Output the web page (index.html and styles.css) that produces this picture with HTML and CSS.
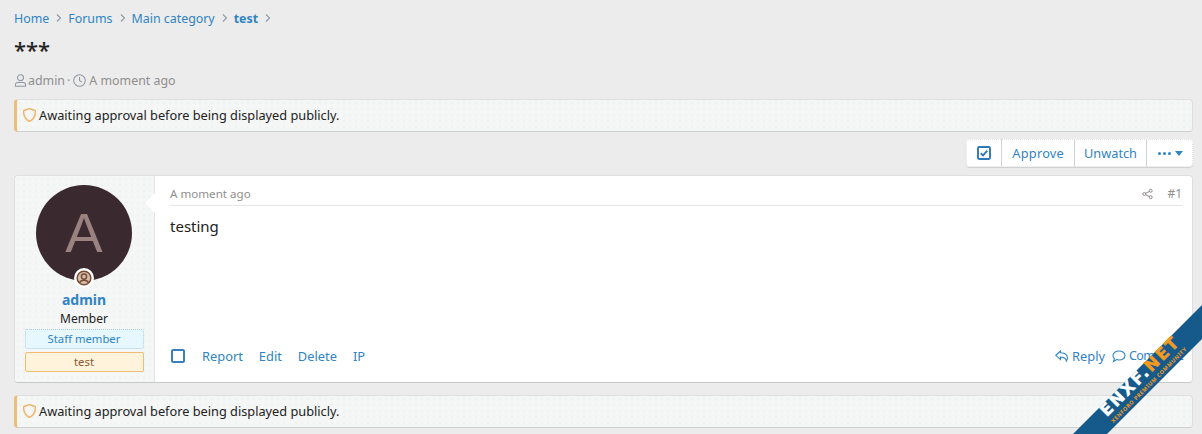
FILE: index.html
```html
<!DOCTYPE html>
<html lang="en">
<head>
<meta charset="utf-8">
<title>test</title>
<link rel="stylesheet" href="styles.css">
</head>
<body>
<nav class="crumbs">
  <a href="#">Home</a><svg class="chev" viewBox="0 0 8 10"><path d="M2 1.500 5.500 5 2 8.500"/></svg>
  <a href="#">Forums</a><svg class="chev" viewBox="0 0 8 10"><path d="M2 1.500 5.500 5 2 8.500"/></svg>
  <a href="#">Main category</a><svg class="chev" viewBox="0 0 8 10"><path d="M2 1.500 5.500 5 2 8.500"/></svg>
  <a href="#" class="bold">test</a><svg class="chev" viewBox="0 0 8 10"><path d="M2 1.500 5.500 5 2 8.500"/></svg>
</nav>
<h1 class="title">***</h1>
<div class="meta">
  <svg class="mi" viewBox="0 0 14 14"><circle cx="7" cy="4" r="3.200"/><path d="M1.500 13.300v-1.600A2.500 2.500 0 0 1 4 9.200h6a2.500 2.500 0 0 1 2.500 2.500v1.600z"/></svg>
  <span>admin</span><span class="dot">·</span>
  <svg class="mi" viewBox="0 0 14 14"><circle cx="7" cy="7" r="6.200"/><path d="M7 3.300V7l2.500 1.700"/></svg>
  <span class="ago">A moment ago</span>
</div>
<div class="notice">
  <svg class="shield" viewBox="1 .5 12 13"><path d="M7 1 12.600 3c0 5-1.600 8-5.600 10C3 11 1.400 8 1.400 3z"/></svg>
  <span>Awaiting approval before being displayed publicly.</span>
</div>
<div class="actions">
  <div class="btnbar">
    <a href="#" class="btn icon"><svg class="check" viewBox="0 0 14 14"><rect x="1" y="1" width="12" height="12" rx="1.200"/><path d="M3.800 7.200 6.100 9.400 10.300 4.700"/></svg></a>
    <a href="#" class="btn approve">Approve</a>
    <a href="#" class="btn unwatch">Unwatch</a>
    <a href="#" class="btn more"><span class="dots"><i></i><i></i><i></i></span><span class="caret"></span></a>
  </div>
</div>
<article class="post">
  <aside class="user">
    <div class="avatar"><span class="letter">A</span>
      <span class="badge"><svg viewBox="0 0 14 14"><circle cx="7" cy="7" r="6"/><circle cx="7" cy="5.700" r="2.300"/><path d="M3 11.500c.8-2 2.200-2.500 4-2.500s3.200.5 4 2.500"/></svg></span>
    </div>
    <a href="#" class="name">admin</a>
    <div class="role">Member</div>
    <div class="tag staff">Staff member</div>
    <div class="tag test">test</div>
  </aside>
  <div class="main">
    <header class="posthead">
      <span>A moment ago</span>
      <span class="right"><svg class="share" viewBox="0 0 12 12"><circle cx="9.500" cy="2.500" r="1.600"/><circle cx="2.500" cy="6" r="1.600"/><circle cx="9.500" cy="9.500" r="1.600"/><path d="M4 5.200 8 3.300M4 6.800l4 1.900"/></svg><span>#1</span></span>
    </header>
    <div class="body">testing</div>
    <footer class="postfoot">
      <span class="box"></span>
      <a href="#">Report</a><a href="#">Edit</a><a href="#">Delete</a><a href="#">IP</a>
      <span class="push"></span>
      <a href="#" class="ia"><svg class="rp" viewBox="0 0 14 14"><path d="M5.500 2 .8 6.300l4.700 4.200V8c3.500 0 5 .8 6 4 2-4 .8-8-6-8.200z"/></svg>Reply</a>
      <a href="#" class="ia comment"><svg class="rp" viewBox="0 0 14 14"><path d="M7 2c3.300 0 6 1.900 6 4.500S10.300 11 7 11c-.9 0-1.700-.1-2.400-.4L1.500 12.500l.9-2.900C1.500 8.800 1 7.700 1 6.500 1 3.900 3.700 2 7 2z"/></svg>Comment</a>
    </footer>
  </div>
</article>
<div class="notice lower">
  <svg class="shield" viewBox="1 .5 12 13"><path d="M7 1 12.600 3c0 5-1.600 8-5.600 10C3 11 1.400 8 1.400 3z"/></svg>
  <span>Awaiting approval before being displayed publicly.</span>
</div>
<div class="ribbonclip">
  <div class="ribbon">
    <div class="rtext"><span class="rw">ENXF.</span><span class="ro">NET</span></div>
    <div class="rsub">XENFORO PREMIUM COMMUNITY</div>
  </div>
</div>
</body>
</html>
```
FILE: styles.css
```css
html, body { height: 100%; }
body {
  margin: 0;
  padding: 0 9px 0 14px;
  background: #ececec;
  font-family: "Noto Sans", "Open Sans", sans-serif;
  font-size: 12.750px;
  color: #222;
  position: relative;
  box-sizing: border-box;
}
a { color: #3084c4; text-decoration: none; }
.crumbs { display: flex; align-items: center; height: 18px; padding-top: 9px; font-size: 12.400px; }
.crumbs .bold { font-weight: 700; }
.chev { width: 8px; height: 10px; margin: 0 5px 0 6px; fill: none; stroke: #8d99a5; stroke-width: 1.100; }
.title { margin: 9px 0 0; font-size: 22px; line-height: 26px; font-weight: 500; color: #222; height: 26px; }
.meta { display: flex; align-items: center; margin-top: 9px; height: 18px; color: #8f8f8f; gap: 1px; font-size: 12.400px; }
.mi { width: 13px; height: 13px; fill: none; stroke: #8f96a3; stroke-width: 1.100; }
.dot { margin: 0 2px 0 1px; }
.ago { margin-left: 2px; }
.notice {
  display: flex; align-items: center; gap: 3px;
  margin-top: 10px; height: 33px; box-sizing: border-box;
  padding: 0 0 2px 6px;
  background-color: #f5f6f6;
  background-image: radial-gradient(circle, #eaecec .6px, transparent .8px);
  background-size: 6px 6px;
  border: 1px solid #dedede; border-bottom-color: #cfcfcf;
  border-left: 3px solid #f0bd72;
  border-radius: 4px;
  color: #222;
}
.notice.lower { margin-top: 12px; }
.shield { width: 13px; height: 14px; fill: none; stroke: #eeb76a; stroke-width: 1.400; flex: none; }
.actions { display: flex; justify-content: flex-end; margin-top: 7px; }
.btnbar { display: flex; height: 28px; background: #fff; border-radius: 4px; box-shadow: 0 1px 1px #cfcfcf; outline: 1px dotted #e2e2e2; outline-offset: -1px; }
.btn { display: flex; align-items: center; padding: 0 10px; border-left: 1px solid #cdd3d8; color: #3084c4; }
.btn:first-child { border-left: 0; }
.btn.icon { padding: 0 10px 0 11px; width: 14px; }
.approve { letter-spacing: .25px; }
.btn.unwatch { padding: 0 9px; }
.check { width: 14px; height: 14px; fill: none; stroke: #2f78b8; stroke-width: 1.900; flex: none; }
.btn.more { padding: 0 10px 0 11px; }
.dots { display: flex; gap: 2px; }
.dots i { width: 3px; height: 3px; border-radius: 50%; background: #3084c4; }
.caret { border: 4px solid transparent; border-top: 5px solid #3084c4; border-bottom: 0; margin-left: 4px; }
.post {
  display: flex; height: 208px; margin-top: 8px;
  background: #fff; border-radius: 4px;
  border: 1px solid #dedede; border-bottom-color: #c8c8c8;
  box-sizing: border-box;
}
.user {
  position: relative;
  width: 140px; flex: none; box-sizing: border-box;
  background-color: #f5f6f6;
  background-image: radial-gradient(circle, #eaecec .6px, transparent .8px);
  background-size: 6px 6px;
  border-right: 1px solid #e2e2e2;
  display: flex; flex-direction: column; align-items: center;
  padding: 9px 1px 0 0; border-radius: 4px 0 0 4px;
}
.user::after {
  content: ""; position: absolute; right: -8px; top: 20px;
  width: 14px; height: 14px; background: #fff;
  transform: rotate(45deg);
}
.avatar {
  position: relative; width: 96px; height: 96px; border-radius: 50%; flex: none;
  background: #3a2a30; display: flex; align-items: center; justify-content: center;
}
.letter { font-size: 56px; line-height: 1; color: #9a8280; font-family: "Liberation Sans", sans-serif; }
.badge {
  position: absolute; left: 38px; bottom: -7px; width: 20px; height: 20px;
  background: #fff; border-radius: 50%; display: flex; align-items: center; justify-content: center;
}
.badge svg { width: 16px; height: 16px; fill: #d4bfae; stroke: #7a4b33; stroke-width: 1.300; }
.name { margin-top: 10px; font-size: 14px; line-height: 18px; font-weight: 700; }
.role { font-size: 12px; line-height: 17px; margin-top: 1px; color: #222; }
.tag { width: 119px; height: 20px; box-sizing: border-box; border-radius: 2px; font-size: 11.300px; line-height: 18px; text-align: center; flex: none; }
.tag.staff { background: #e6f7fe; border: 1px dotted #a9cfe6; color: #3084c4; margin-top: 2px; }
.tag.test { background: #fff3dc; border: 1px solid #f0bd72; color: #8a5a2c; margin-top: 3px; }
.main { flex: 1; display: flex; flex-direction: column; padding: 0 9px 0 15px; min-width: 0; }
.posthead { display: flex; justify-content: space-between; align-items: center; height: 30px; box-sizing: border-box; padding-top: 6px; border-bottom: 1px solid #e6e6e6; color: #8f8f8f; font-size: 11.600px; flex: none; }
.right { display: flex; align-items: center; gap: 14px; font-size: 12px; padding-right: 1px; }
.share { width: 11px; height: 12px; fill: none; stroke: #857f80; stroke-width: 1; }
.body { flex: 1; padding-top: 11px; font-size: 15px; line-height: 18px; color: #222; }
.postfoot { display: flex; align-items: center; height: 25px; margin-bottom: 14px; gap: 16px; flex: none; font-size: 12.850px; }
.box { width: 10px; height: 10px; border: 2px solid #3a7fc0; border-radius: 2px; margin: 0 1px; }
.push { flex: 1; }
.ia { display: flex; align-items: center; gap: 3px; }
.postfoot .ia + .ia { margin-left: -9px; }
.comment { font-size: 12.500px; letter-spacing: -.6px; }
.rp { width: 14px; height: 14px; fill: none; stroke: #3084c4; stroke-width: 1.100; flex: none; }
.ribbonclip { position: absolute; inset: 0; overflow: hidden; pointer-events: none; }
.ribbon {
  position: absolute; left: 994px; top: 368px; width: 300px; height: 24px;
  background: #155a8a; transform: rotate(-45deg);
  display: flex; flex-direction: column; align-items: center;
}
.rtext { font-family: "DejaVu Sans", sans-serif; font-weight: 700; font-size: 16.500px; line-height: 14px; letter-spacing: 2px; white-space: nowrap; -webkit-text-stroke: .4px currentColor; }
.rw { color: #fff; }
.ro { color: #f39a1e; }
.rsub { font-size: 5.500px; line-height: 6px; margin-top: 2px; font-weight: 700; color: #f39a1e; letter-spacing: .5px; white-space: nowrap; }
```
